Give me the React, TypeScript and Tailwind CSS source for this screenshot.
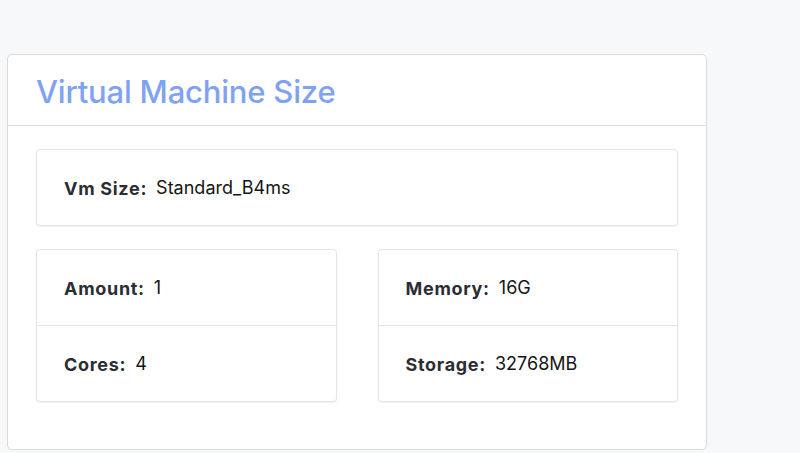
import React from 'react';

interface Field {
  label: string;
  value: string;
}

const Row: React.FC<{ field: Field }> = ({ field }) => (
  <div className="flex items-center h-[75px] px-[27px] pt-[2px]">
    <span className="text-[18px] font-bold tracking-[0.7px] text-[#2b2d33] mr-[9px]">{field.label}:</span>
    <span className="text-[18px] text-[#151515] -mt-[3px]">{field.value}</span>
  </div>
);

const InfoCard: React.FC<{ fields: Field[] }> = ({ fields }) => (
  <div className="bg-white border border-[#e4e4ea] rounded-[4px] shadow-[0_1px_2px_rgba(0,0,0,0.06)]">
    {fields.map((f, i) => (
      <React.Fragment key={f.label}>
        {i > 0 && <div className="h-px bg-[#e4e4ea]" />}
        <Row field={f} />
      </React.Fragment>
    ))}
  </div>
);

export default function App() {
  return (
    <div className="min-h-[453px] bg-[#f7f8fa] pt-[54px] pl-[7px] font-['Inter','Liberation_Sans',sans-serif]">
      <div className="w-[700px] bg-white border border-[#dcdcdf] rounded-[5px]">
        <div className="h-[71px] flex items-center px-[28px] border-b border-[#dcdcdf]">
          <h1 className="text-[31px] font-medium text-[#7fa2f3] tracking-[-0.2px] pt-[4px]">Virtual Machine Size</h1>
        </div>
        <div className="px-[28px] pt-[23px] pb-[47px] flex flex-col gap-[23px]">
          <InfoCard fields={[{ label: 'Vm Size', value: 'Standard_B4ms' }]} />
          <div className="grid grid-cols-2 gap-[41px]">
            <InfoCard
              fields={[
                { label: 'Amount', value: '1' },
                { label: 'Cores', value: '4' },
              ]}
            />
            <InfoCard
              fields={[
                { label: 'Memory', value: '16G' },
                { label: 'Storage', value: '32768MB' },
              ]}
            />
          </div>
        </div>
      </div>
    </div>
  );
}
